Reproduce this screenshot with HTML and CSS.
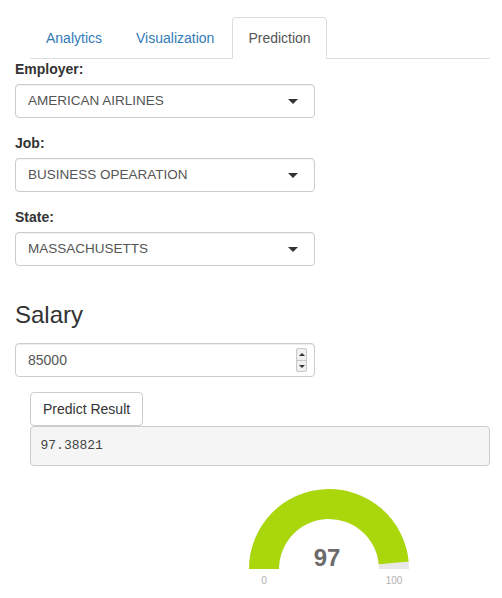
FILE: index.html
```html
<!DOCTYPE html>
<html>
<head>
<meta charset="utf-8">
<link rel="stylesheet" href="styles.css">
</head>
<body>
<div class="page">
  <ul class="tabs">
    <li class="tab"><a>Analytics</a></li>
    <li class="tab"><a>Visualization</a></li>
    <li class="tab active"><a>Prediction</a></li>
  </ul>

  <div class="form-area">
    <div class="form-group">
      <label class="label">Employer:</label>
      <div class="select"><span>AMERICAN AIRLINES</span><span class="caret"></span></div>
    </div>
    <div class="form-group">
      <label class="label">Job:</label>
      <div class="select"><span>BUSINESS OPEARATION</span><span class="caret"></span></div>
    </div>
    <div class="form-group">
      <label class="label">State:</label>
      <div class="select"><span>MASSACHUSETTS</span><span class="caret"></span></div>
    </div>

    <h3 class="heading">Salary</h3>
    <div class="form-group num-group">
      <div class="number">
        <span class="num-value">85000</span>
        <span class="spinner">
          <span class="spin-btn"><span class="tri-up"></span></span>
          <span class="spin-btn"><span class="tri-down"></span></span>
        </span>
      </div>
    </div>
  </div>

  <div class="result">
    <button class="btn">Predict Result</button>
    <pre class="output">97.38821</pre>
  </div>

  <div class="gauge-wrap">
    <svg class="gauge" width="200" height="120" viewBox="0 0 200 120">
      <path d="M20,95 A80,80 0 0 1 180,95 L150,95 A50,50 0 0 0 50,95 Z" fill="#e8e8e8"/>
      <path d="M20,95 A80,80 0 0 1 179.64,87.47 L149.78,90.29 A50,50 0 0 0 50,95 Z" fill="#a9d70b"/>
      <text x="98" y="92" text-anchor="middle" class="g-val">97</text>
      <text x="35" y="110" text-anchor="middle" class="g-lbl">0</text>
      <text x="165" y="110" text-anchor="middle" class="g-lbl">100</text>
    </svg>
  </div>
</div>
</body>
</html>
```

FILE: styles.css
```css
* { box-sizing: border-box; }
html, body { margin: 0; padding: 0; background: #fff; }
body {
  font-family: "Liberation Sans", Arial, sans-serif;
  font-size: 14px;
  line-height: 20px;
  color: #333;
}
.page { padding-top: 17px; width: 502px; }

.tabs {
  list-style: none;
  margin: 0 0 0 30px;
  padding: 0;
  width: 460px;
  display: flex;
  border-bottom: 1px solid #ddd;
}
.tab { margin-bottom: -1px; margin-right: 2px; }
.tab a {
  display: block;
  padding: 10px 15px;
  line-height: 20px;
  border: 1px solid transparent;
  border-radius: 4px 4px 0 0;
  color: #337ab7;
}
.tab.active a {
  color: #555;
  background: #fff;
  border-color: #ddd #ddd transparent #ddd;
}

.form-area { margin-left: 15px; width: 300px; }
.form-group { margin-bottom: 15px; }
.label {
  display: block;
  font-weight: bold;
  margin-bottom: 5px;
  line-height: 20px;
}
.select {
  height: 34px;
  border: 1px solid #ccc;
  border-radius: 4px;
  padding: 0 16px 0 12px;
  display: flex;
  align-items: center;
  justify-content: space-between;
  font-size: 13.5px;
  color: #555;
  box-shadow: inset 0 1px 1px rgba(0,0,0,0.05);
}
.caret {
  width: 0; height: 0;
  border-left: 5px solid transparent;
  border-right: 5px solid transparent;
  border-top: 5px solid #333;
}

.heading {
  font-size: 24px;
  font-weight: 500;
  line-height: 1.1;
  margin: 36px 0 15px;
  color: #333;
}
.number {
  height: 34px;
  border: 1px solid #ccc;
  border-radius: 4px;
  padding: 0 7px 0 12px;
  display: flex;
  align-items: center;
  justify-content: space-between;
  color: #555;
  box-shadow: inset 0 1px 1px rgba(0,0,0,0.075);
}
.spinner {
  display: flex;
  flex-direction: column;
  width: 11px;
  height: 24px;
  border: 1px solid #c8c8c8;
  border-radius: 2px;
  background: #f0f0f0;
}
.spin-btn {
  flex: 1;
  display: flex;
  align-items: center;
  justify-content: center;
}
.spin-btn + .spin-btn { border-top: 1px solid #c8c8c8; }
.tri-up, .tri-down {
  width: 0; height: 0;
  border-left: 3px solid transparent;
  border-right: 3px solid transparent;
}
.tri-up { border-bottom: 3px solid #333; }
.tri-down { border-top: 3px solid #333; }

.result { margin-left: 30px; width: 460px; }
.btn {
  display: block;
  font-family: "Liberation Sans", Arial, sans-serif;
  font-size: 14px;
  line-height: 20px;
  padding: 6px 12px;
  color: #333;
  background: #fff;
  border: 1px solid #ccc;
  border-radius: 4px;
}
.output {
  margin: 0;
  padding: 9.5px;
  font-family: "Liberation Mono", "Courier New", monospace;
  font-size: 13px;
  line-height: 18.57px;
  color: #444;
  background: #f5f5f5;
  border: 1px solid #ccc;
  border-radius: 4px;
}

.gauge-wrap { padding: 8px 0 0 229px; }
.gauge { display: block; }
.g-val {
  font-family: "Liberation Sans", Arial, sans-serif;
  font-size: 24px;
  font-weight: bold;
  fill: #6b6b6b;
}
.g-lbl {
  font-family: "Liberation Sans", Arial, sans-serif;
  font-size: 10px;
  fill: #b0b0b0;
}
```
